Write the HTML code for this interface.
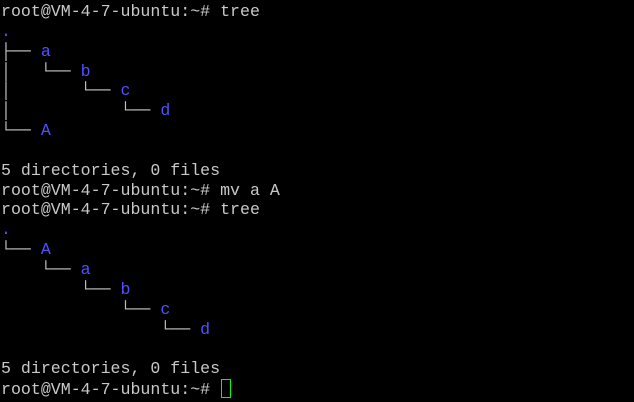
<!DOCTYPE html>
<html><head><style>
html,body{margin:0;padding:0;background:#000;width:634px;height:402px;overflow:hidden}
pre{margin:0;padding:2px 0 0 1px;font-family:"Liberation Mono",monospace;font-size:16.6px;line-height:19.85px;color:#c8c8c8;letter-spacing:0}
.b{color:#5050ff}
.t{color:#c0c0c0}
.cur{display:inline-block;width:8px;height:17px;border:1px solid #00ff00;vertical-align:-4px;margin-left:1px}
</style></head><body><pre>root@VM-4-7-ubuntu:~# tree
<span class="b">.</span>
<span class="t">├── </span><span class="b">a</span>
<span class="t">│   └── </span><span class="b">b</span>
<span class="t">│       └── </span><span class="b">c</span>
<span class="t">│           └── </span><span class="b">d</span>
<span class="t">└── </span><span class="b">A</span>

5 directories, 0 files
root@VM-4-7-ubuntu:~# mv a A
root@VM-4-7-ubuntu:~# tree
<span class="b">.</span>
<span class="t">└── </span><span class="b">A</span>
<span class="t">    └── </span><span class="b">a</span>
<span class="t">        └── </span><span class="b">b</span>
<span class="t">            └── </span><span class="b">c</span>
<span class="t">                └── </span><span class="b">d</span>

5 directories, 0 files
root@VM-4-7-ubuntu:~# <span class="cur"></span></pre></body></html>
